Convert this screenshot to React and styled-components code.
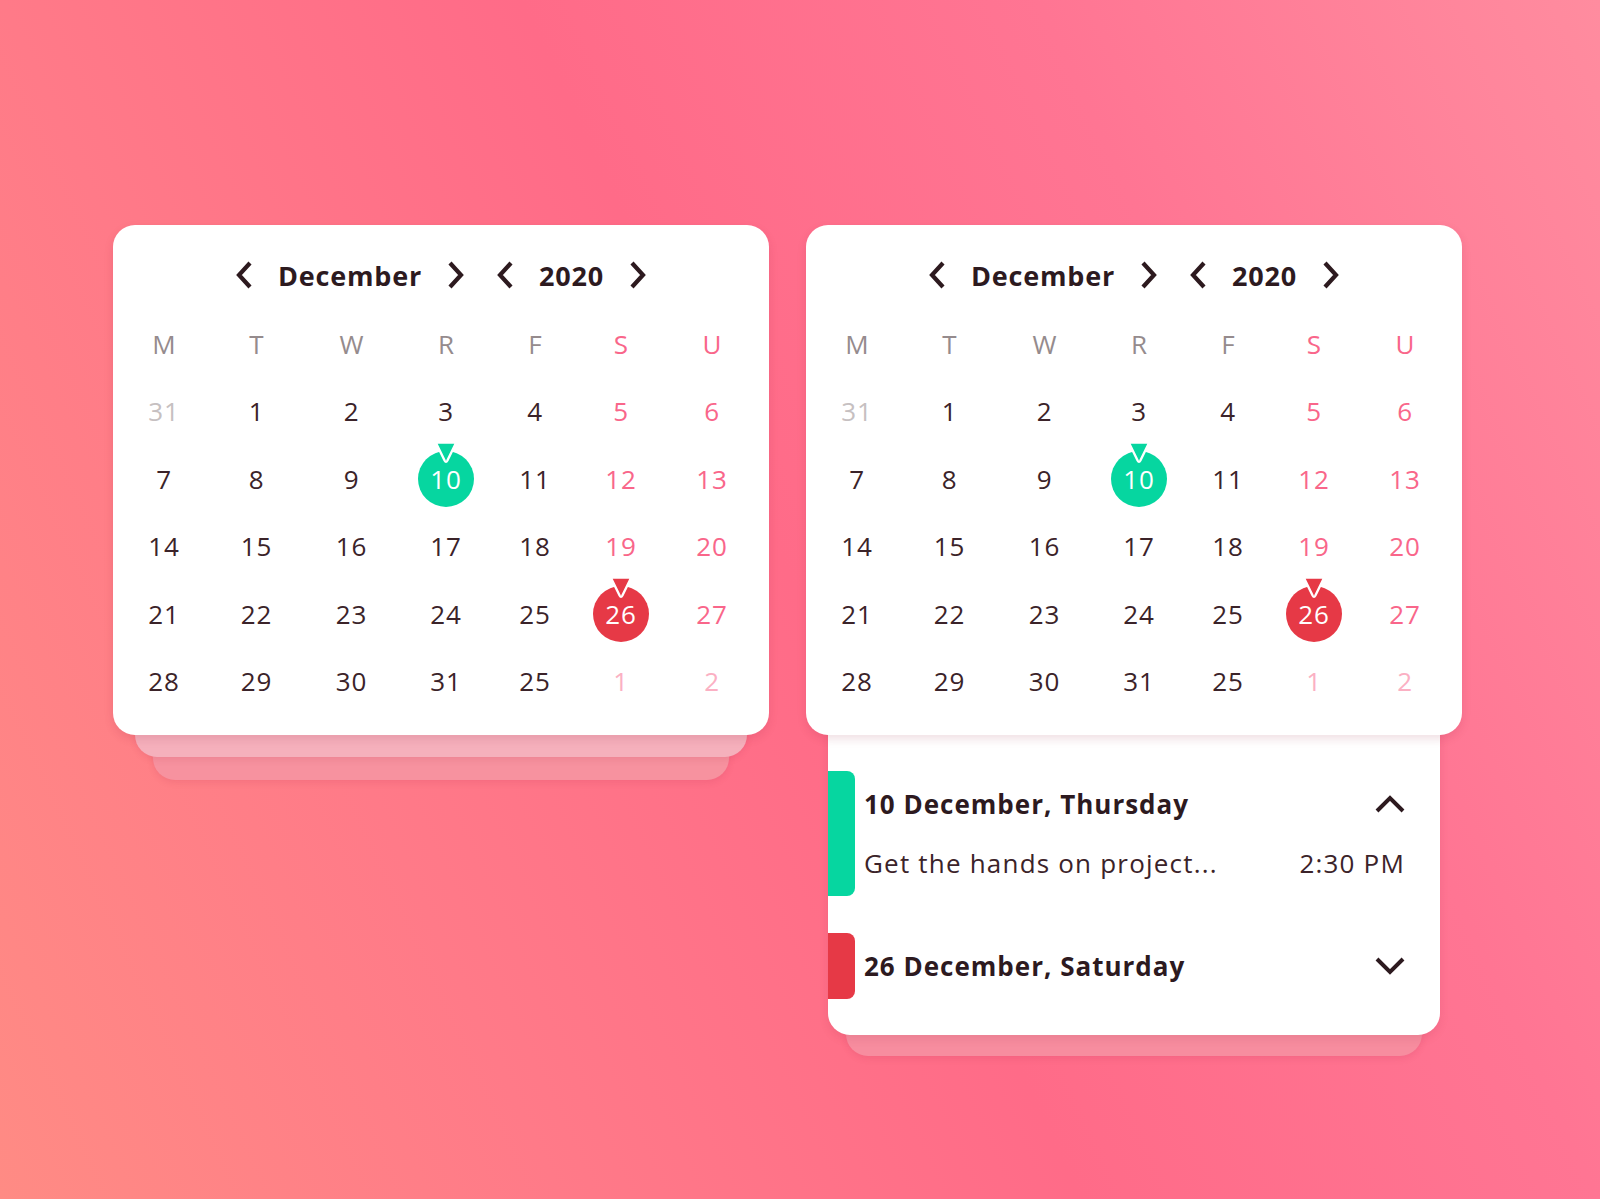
import React from 'react';
import styled, { createGlobalStyle } from 'styled-components';

const GlobalStyle = createGlobalStyle`
  html, body { margin: 0; padding: 0; }
  body {
    width: 1600px;
    height: 1199px;
    overflow: hidden;
    font-family: "Open Sans", "Liberation Sans", sans-serif;
    background: linear-gradient(65deg, #ff8b84 0%, #ff7a88 26%, #ff6b88 50%, #ff7593 74%, #ff8c9f 100%);
  }
`;

const Page = styled.main`
  display: flex;
  align-items: flex-start;
  gap: 37px;
  padding: 225px 0 0 113px;
`;

const Column = styled.div`
  width: 656px;
  display: flex;
  flex-direction: column;
`;

const Card = styled.section`
  position: relative;
  z-index: 3;
  background: #fff;
  border-radius: 22px;
  padding: 24px 0 20px;
  box-shadow: 0 4px 10px rgba(150, 30, 60, 0.14);
`;

const Header = styled.div`
  height: 52px;
  display: flex;
  align-items: center;
  justify-content: center;
  gap: 31px;
`;

const NavGroup = styled.div`
  display: flex;
  align-items: center;
  gap: 25px;
`;

const NavButton = styled.button`
  border: 0;
  padding: 0;
  background: none;
  width: 18px;
  height: 28px;
  display: flex;
  align-items: center;
  justify-content: center;
  cursor: pointer;
  color: #2d1a1f;
`;

const NavLabel = styled.span`
  font-size: 27px;
  font-weight: 700;
  color: #2d1a1f;
  letter-spacing: 0.8px;
`;

const Grid = styled.div`
  margin-top: 9px;
  padding: 0 0 0 5px;
  display: grid;
  grid-template-columns: 92px 93px 97px 92px 86px 86px 96px;
  grid-auto-rows: 67.5px;
`;

const Cell = styled.div`
  display: flex;
  align-items: center;
  justify-content: center;
`;

const toneColor = {
  head: '#958b8d',
  headWeekend: '#f9668a',
  muted: '#c6c0c1',
  normal: '#3b2329',
  weekend: '#f9668a',
  next: '#fbb0c3',
};

const Weekday = styled.span`
  font-size: 26px;
  font-weight: 400;
  color: ${(p) => (p.$weekend ? toneColor.headWeekend : toneColor.head)};
`;

const Day = styled.span`
  font-size: 26px;
  font-weight: 400;
  letter-spacing: 0.8px;
  color: ${(p) => toneColor[p.$tone]};
`;

const Bubble = styled.span`
  position: relative;
  width: 56px;
  height: 56px;
  border-radius: 50%;
  background: ${(p) => p.$color};
  color: #fff;
  font-size: 26px;
  letter-spacing: 0.8px;
  display: flex;
  align-items: center;
  justify-content: center;
`;

const Marker = styled.svg`
  position: absolute;
  top: -11px;
  left: 50%;
  transform: translateX(-50%);
`;

const Layer = styled.div`
  position: relative;
  z-index: ${(p) => p.$z};
  margin: -30px ${(p) => p.$inset}px 0;
  height: ${(p) => p.$h}px;
  background: ${(p) => p.$bg};
  border-radius: 0 0 22px 22px;
  box-shadow: 0 3px 6px rgba(170, 40, 70, 0.12);
`;

const Panel = styled.div`
  position: relative;
  z-index: 2;
  margin: -20px 22px 0;
  background: #fff;
  border-radius: 0 0 22px 22px;
  padding: 56px 0 36px;
  display: flex;
  flex-direction: column;
  gap: 37px;
  box-shadow: 0 4px 10px rgba(150, 30, 60, 0.12);
`;

const Event = styled.div`
  display: flex;
  gap: 9px;
`;

const Accent = styled.div`
  width: 27px;
  flex-shrink: 0;
  background: ${(p) => p.$color};
  border-radius: 0 8px 8px 0;
`;

const EventBody = styled.div`
  flex: 1;
  padding-right: 35px;
`;

const EventHead = styled.div`
  height: 66px;
  display: flex;
  align-items: center;
  justify-content: space-between;
`;

const EventTitle = styled.h3`
  margin: 0;
  font-size: 26px;
  font-weight: 700;
  color: #2d1a1f;
  letter-spacing: 1px;
`;

const EventRow = styled.div`
  height: 59px;
  box-sizing: border-box;
  padding-top: 6px;
  display: flex;
  justify-content: space-between;
  align-items: flex-start;
  font-size: 26px;
  line-height: 40px;
  letter-spacing: 1.2px;
  color: #3b2329;
`;

const Toggle = styled.button`
  border: 0;
  padding: 0;
  background: none;
  width: 30px;
  height: 20px;
  display: flex;
  align-items: center;
  justify-content: center;
  cursor: pointer;
`;

const Chevron = ({ dir }) => (
  <svg width="18" height="28" viewBox="0 0 18 28">
    <polyline
      points={dir === 'left' ? '15,2 4,14 15,26' : '3,2 14,14 3,26'}
      fill="none"
      stroke="#2d1a1f"
      strokeWidth="4.2"
      strokeLinejoin="miter"
    />
  </svg>
);

const Caret = ({ up }) => (
  <svg width="30" height="18" viewBox="0 0 30 18">
    <polyline
      points={up ? '2,16 15,3 28,16' : '2,2 15,15 28,2'}
      fill="none"
      stroke="#2d1a1f"
      strokeWidth="4"
      strokeLinejoin="miter"
    />
  </svg>
);

const weekdays = ['M', 'T', 'W', 'R', 'F', 'S', 'U'];

const weeks = [
  [[31, 'prev'], [1], [2], [3], [4], [5], [6]],
  [[7], [8], [9], [10], [11], [12], [13]],
  [[14], [15], [16], [17], [18], [19], [20]],
  [[21], [22], [23], [24], [25], [26], [27]],
  [[28], [29], [30], [31], [25], [1, 'next'], [2, 'next']],
];

const marked = { 10: '#06d6a0', 26: '#e63946' };

function Calendar() {
  return (
    <Card>
      <Header>
        <NavGroup>
          <NavButton aria-label="previous month"><Chevron dir="left" /></NavButton>
          <NavLabel>December</NavLabel>
          <NavButton aria-label="next month"><Chevron dir="right" /></NavButton>
        </NavGroup>
        <NavGroup>
          <NavButton aria-label="previous year"><Chevron dir="left" /></NavButton>
          <NavLabel>2020</NavLabel>
          <NavButton aria-label="next year"><Chevron dir="right" /></NavButton>
        </NavGroup>
      </Header>
      <Grid>
        {weekdays.map((d, i) => (
          <Cell key={d + i}>
            <Weekday $weekend={i >= 5}>{d}</Weekday>
          </Cell>
        ))}
        {weeks.map((week, wi) =>
          week.map(([n, kind], di) => {
            const key = `${wi}-${di}`;
            if (!kind && marked[n]) {
              const c = marked[n];
              return (
                <Cell key={key}>
                  <Bubble $color={c}>
                    <Marker width="24" height="26" viewBox="0 0 24 26">
                      <path
                        d="M4.5 2.5 H19.5 Q22.3 2.5 21 5 L13.4 20.5 Q12 23 10.6 20.5 L3 5 Q1.7 2.5 4.5 2.5 Z"
                        fill={c}
                        stroke="#fff"
                        strokeWidth="2.4"
                      />
                    </Marker>
                    {n}
                  </Bubble>
                </Cell>
              );
            }
            let tone = 'normal';
            if (kind === 'prev') tone = 'muted';
            else if (kind === 'next') tone = 'next';
            else if (di >= 5) tone = 'weekend';
            return (
              <Cell key={key}>
                <Day $tone={tone}>{n}</Day>
              </Cell>
            );
          })
        )}
      </Grid>
    </Card>
  );
}

export default function App() {
  return (
    <>
      <GlobalStyle />
      <Page>
        <Column>
          <Calendar />
          <Layer $z={2} $inset={22} $h={52} $bg="#f5b0bc" />
          <Layer $z={1} $inset={40} $h={53} $bg="#f7929f" />
        </Column>
        <Column>
          <Calendar />
          <Panel>
            <Event>
              <Accent $color="#06d6a0" />
              <EventBody>
                <EventHead>
                  <EventTitle>10 December, Thursday</EventTitle>
                  <Toggle aria-label="collapse"><Caret up /></Toggle>
                </EventHead>
                <EventRow>
                  <span>Get the hands on project...</span>
                  <span>2:30 PM</span>
                </EventRow>
              </EventBody>
            </Event>
            <Event>
              <Accent $color="#e63946" />
              <EventBody>
                <EventHead>
                  <EventTitle>26 December, Saturday</EventTitle>
                  <Toggle aria-label="expand"><Caret /></Toggle>
                </EventHead>
              </EventBody>
            </Event>
          </Panel>
          <Layer $z={1} $inset={40} $h={51} $bg="#f78d9f" />
        </Column>
      </Page>
    </>
  );
}
